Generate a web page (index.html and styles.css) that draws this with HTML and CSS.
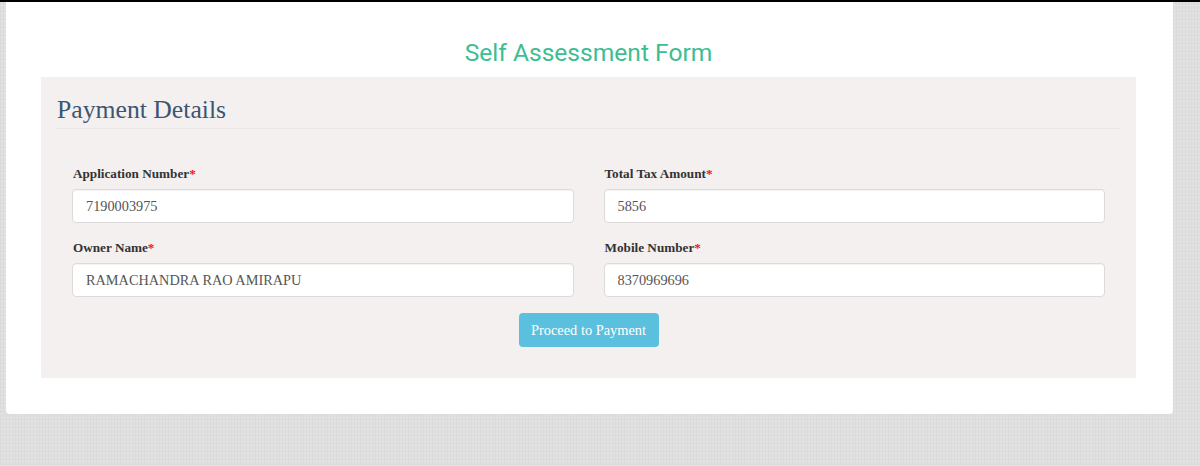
FILE: index.html
```html
<!DOCTYPE html>
<html lang="en">
<head>
  <meta charset="UTF-8" />
  <meta name="viewport" content="width=device-width, initial-scale=1.0" />
  <title>Self Assessment Form</title>
  <link rel="stylesheet" href="styles.css">
</head>
<body>

<div class="card">
  <h1 class="form-title">Self Assessment Form</h1>

  <div class="panel">
    <h2 class="panel-title">Payment Details</h2>

    <form class="fields">
      <div class="field">
        <label for="appNo">Application Number<span class="req">*</span></label>
        <input id="appNo" type="text" value="7190003975" />
      </div>
      <div class="field">
        <label for="taxAmount">Total Tax Amount<span class="req">*</span></label>
        <input id="taxAmount" type="text" value="5856" />
      </div>
      <div class="field">
        <label for="owner">Owner Name<span class="req">*</span></label>
        <input id="owner" type="text" value="RAMACHANDRA RAO AMIRAPU" />
      </div>
      <div class="field">
        <label for="mobile">Mobile Number<span class="req">*</span></label>
        <input id="mobile" type="text" value="8370969696" />
      </div>
      <div class="actions">
        <button type="button" class="btn-pay">Proceed to Payment</button>
      </div>
    </form>
  </div>
</div>

</body>
</html>
```

FILE: styles.css
```css
html, body {
  height: 100%;
}

body {
  margin: 0;
  padding: 0 27px 0 6px;
  box-sizing: border-box;
  overflow: hidden;
  font-family: "Liberation Serif", "Times New Roman", serif;
  color: #333;
  border-top: 2px solid #000;
  background-color: #dfdfdf;
  background-image:
    repeating-linear-gradient(0deg, rgba(255, 255, 255, 0.16) 0, rgba(255, 255, 255, 0.16) 1px, transparent 1px, transparent 4px),
    repeating-linear-gradient(90deg, rgba(130, 130, 130, 0.06) 0, rgba(130, 130, 130, 0.06) 1px, transparent 1px, transparent 3px);
}

.card {
  background: #fff;
  height: 412px;
  box-sizing: border-box;
  padding: 35px 37px 0 35px;
  border-radius: 0 0 4px 4px;
}

.form-title {
  margin: 0;
  height: 40px;
  line-height: 32px;
  text-align: center;
  font-family: Roboto, sans-serif;
  font-size: 24.6px;
  font-weight: 400;
  color: #3dbd94;
}

.panel {
  background: #f4f0f0;
  height: 301px;
  box-sizing: border-box;
  padding: 16px;
}

.panel-title {
  margin: 0;
  height: 35px;
  line-height: 34px;
  font-size: 25.7px;
  font-weight: 400;
  color: #3c5570;
  border-bottom: 1px solid #e8e6e6;
}

.fields {
  display: grid;
  grid-template-columns: 1fr 1fr;
  column-gap: 30px;
  row-gap: 16px;
  padding: 36px 15px 0;
}

.field {
  display: flex;
  flex-direction: column;
}

.field label {
  height: 24px;
  line-height: 18px;
  padding-left: 1px;
  font-size: 13.2px;
  font-weight: 700;
  color: #333;
}

.req {
  color: #f0142f;
}

.field input {
  height: 34px;
  box-sizing: border-box;
  width: 100%;
  padding: 0 13px;
  font-family: inherit;
  font-size: 14.3px;
  color: #555;
  background: #fff;
  border: 1px solid #dcdada;
  border-radius: 4px;
  box-shadow: inset 0 1px 1px rgba(0, 0, 0, 0.05);
}

.actions {
  grid-column: 1 / -1;
  display: flex;
  justify-content: center;
}

.btn-pay {
  height: 34px;
  width: 140px;
  padding: 0;
  font-family: inherit;
  font-size: 14.4px;
  color: #fff;
  background: #5bc0de;
  border: none;
  border-radius: 4px;
}
```
